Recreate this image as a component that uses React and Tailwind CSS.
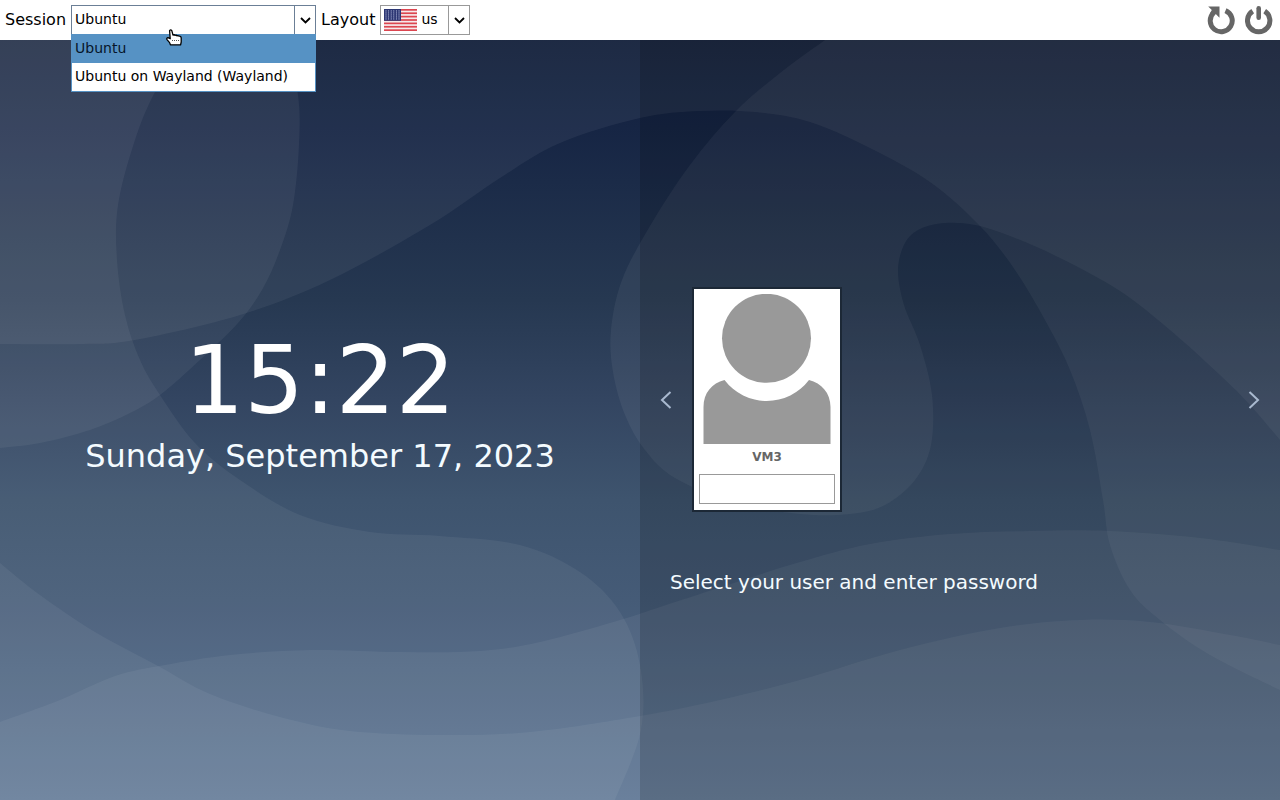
import React from "react";

const SANS = "font-['DejaVu_Sans','Noto_Sans',sans-serif]";

/* Smooth curve through a list of points (Catmull-Rom turned into cubic Béziers). */
function smooth(points) {
  let d = `M${points[0][0]},${points[0][1]}`;
  for (let i = 0; i < points.length - 1; i++) {
    const p0 = points[i - 1] || points[i];
    const p1 = points[i];
    const p2 = points[i + 1];
    const p3 = points[i + 2] || p2;
    d += `C${p1[0] + (p2[0] - p0[0]) / 6},${p1[1] + (p2[1] - p0[1]) / 6} ${p2[0] - (p3[0] - p1[0]) / 6},${p2[1] - (p3[1] - p1[1]) / 6} ${p2[0]},${p2[1]}`;
  }
  return d;
}

const WAVES = [
  {
    points: [[0, 344], [80, 344], [135, 340], [240, 315], [330, 280], [430, 225], [500, 178], [560, 143], [640, 118], [700, 111], [755, 112], [810, 122], [870, 148], [930, 182], [980, 226], [1015, 270], [1045, 320], [1070, 370], [1090, 430], [1103, 500], [1110, 545], [1130, 590], [1160, 620], [1210, 655], [1280, 690]],
    close: "V0H0Z",
  },
  {
    points: [[215, 0], [185, 45], [155, 92], [135, 140], [118, 205], [117, 260], [125, 315], [140, 360], [160, 395], [195, 443], [240, 480], [300, 515], [370, 532], [440, 536], [520, 545], [580, 572], [620, 612], [640, 665], [641, 730], [615, 800]],
    close: "H0V0Z",
  },
  {
    points: [[262, 0], [285, 45], [298, 95], [299, 145], [293, 205], [280, 250], [262, 290], [238, 323], [200, 360], [160, 395], [130, 413], [90, 430], [40, 443], [0, 448]],
    close: "V0Z",
  },
  {
    points: [[0, 563], [40, 595], [95, 632], [160, 667], [210, 694], [280, 717], [350, 731], [440, 735], [530, 732], [640, 716], [720, 700], [800, 680], [900, 650], [1000, 628], [1080, 620], [1150, 622], [1230, 635], [1280, 645]],
    close: "V800H0Z",
  },
  {
    points: [[0, 722], [60, 700], [115, 676], [165, 665], [230, 655], [310, 650], [400, 652], [480, 651], [540, 642], [620, 620], [660, 607], [740, 581], [800, 562], [870, 544], [950, 534], [1030, 531], [1110, 531], [1200, 538], [1280, 550]],
    close: "V800H0Z",
  },
  {
    points: [[880, 0], [825, 40], [780, 73], [735, 112], [690, 165], [650, 226], [622, 280], [611, 330], [613, 372], [625, 415], [645, 450], [675, 478], [735, 503], [800, 514], [850, 514], [885, 505], [915, 480], [931, 445], [932, 395], [920, 345], [904, 305], [898, 270], [905, 243], [920, 229], [945, 223], [975, 225], [1010, 236], [1060, 258], [1120, 291], [1170, 330], [1220, 375], [1250, 405], [1280, 440]],
    close: "V0Z",
  },
];

function Wallpaper() {
  return (
    <svg
      className="absolute inset-0 h-full w-full"
      viewBox="0 0 1280 800"
      preserveAspectRatio="none"
      aria-hidden="true"
    >
      <defs>
        <linearGradient id="sky" x1="0" y1="0" x2="0" y2="1">
          <stop offset="0" stopColor="#0e1b35" />
          <stop offset="0.16" stopColor="#162544" />
          <stop offset="0.375" stopColor="#263851" />
          <stop offset="0.5" stopColor="#334561" />
          <stop offset="0.625" stopColor="#3e546e" />
          <stop offset="0.75" stopColor="#455b77" />
          <stop offset="1" stopColor="#597291" />
        </linearGradient>
      </defs>
      <rect width="1280" height="800" fill="url(#sky)" />
      {WAVES.map((w, i) => (
        <path key={i} d={smooth(w.points) + w.close} fill="#fff" fillOpacity="0.055" />
      ))}
    </svg>
  );
}

function Chevron({ className, d = "M1 1l4.500 4.500L10 1", box = "0 0 11 7", width = 1.8 }) {
  return (
    <svg className={className} viewBox={box} fill="none" stroke="currentColor" strokeWidth={width} aria-hidden="true">
      <path d={d} />
    </svg>
  );
}

function UsFlag() {
  const stars = [];
  for (let r = 0; r < 5; r++) {
    for (let c = 0; c < 6; c++) {
      stars.push(<circle key={`${r}-${c}`} cx={2 + c * 2.6} cy={1.9 + r * 2} r="0.55" />);
    }
  }
  return (
    <svg className="h-[22px] w-[33px]" viewBox="0 0 33 22" aria-hidden="true">
      <rect width="33" height="22" fill="#f6e9ea" />
      {[0, 1, 2, 3, 4, 5, 6].map((i) => (
        <rect key={i} y={(i * 44) / 13} width="33" height={22 / 13} fill="#dc4650" />
      ))}
      <rect width="17" height="11.8" fill="#2c3673" />
      <g fill="#b9c0e0">{stars}</g>
    </svg>
  );
}

function HandCursor() {
  return (
    <svg
      className="pointer-events-none absolute top-[29px] left-[166px] z-20 h-[17px] w-[17px]"
      viewBox="0 0 17 17"
      aria-hidden="true"
    >
      <path
        d="M3.6 1.6Q4.700 .2 5.800 1.600L7 6.200Q8 5.200 9 6.400Q10.200 5.600 11 6.800Q12.200 6.200 13 7.200Q15 6.800 15.200 9V13L14.600 15.800H4.400L3.600 13.600L1 10.600Q.3 8.800 2 8.700L4.200 9.700Z"
        fill="#fff"
        stroke="#000"
        strokeWidth="1.3"
        strokeLinejoin="round"
      />
      <path d="M6 11.500h7" stroke="#555" strokeDasharray="1 1" />
    </svg>
  );
}

function RestartIcon() {
  return (
    <svg className="h-[30px] w-[30px]" viewBox="0 0 30 30" aria-hidden="true">
      <path d="M18.500 5.600A11 11 0 1 1 6.600 7.800" fill="none" stroke="#666" strokeWidth="5" />
      <path d="M1.200 1.500H12.500V12.800L9 9.300L5 10L2.800 8.500L4.800 5Z" fill="#666" />
    </svg>
  );
}

function PowerIcon() {
  return (
    <svg className="h-[30px] w-[30px]" viewBox="0 0 30 30" aria-hidden="true">
      <path d="M19.700 6.200A11.200 11.200 0 1 1 7.700 6.200" fill="none" stroke="#666" strokeWidth="5" />
      <path d="M13.700 3.200V12.700" stroke="#666" strokeWidth="4.600" strokeLinecap="round" />
    </svg>
  );
}

function Avatar() {
  return (
    <svg className="h-[150px] w-32" viewBox="0 0 128 150" aria-hidden="true">
      <g fill="#999">
        <circle cx="63.500" cy="44.300" r="44.500" />
        <path d="M.5 150V113C.5 99 9 89 21.500 86A53 53 0 0 0 106 86C118.500 89 127.500 99 127.500 113V150Z" />
      </g>
    </svg>
  );
}

function TopBar() {
  return (
    <header className="relative z-10 flex h-10 items-center justify-between bg-white px-[5px] text-black">
      <div className="flex items-center gap-[5px]">
        <label htmlFor="session" className="text-base">Session</label>
        <div className="relative h-[30px] w-[245px]">
          <select
            id="session"
            defaultValue="Ubuntu"
            className="h-full w-full appearance-none border border-[#6b7f96] bg-white pr-6 pb-[2px] pl-[3px] text-sm outline-none"
          >
            <option>Ubuntu</option>
            <option>Ubuntu on Wayland (Wayland)</option>
          </select>
          <span className="pointer-events-none absolute inset-y-0 right-0 flex w-[22px] items-center justify-center border-l border-[#6b7f96]">
            <Chevron className="h-[7px] w-[11px]" />
          </span>
          <ul role="listbox" aria-label="Sessions" className="absolute inset-x-0 top-[29px] border border-[#5692c4] bg-white text-sm leading-[26px]">
            <li role="option" aria-selected="true" className="bg-[#5692c4] pb-[2px] pl-[3px] text-[#06162a]">Ubuntu</li>
            <li role="option" aria-selected="false" className="pb-[2px] pl-[3px]">Ubuntu on Wayland (Wayland)</li>
          </ul>
        </div>
        <label htmlFor="layout" className="text-base">Layout</label>
        <div className="relative h-[30px] w-[90px]">
          <select
            id="layout"
            defaultValue="us"
            className="h-full w-full appearance-none border border-[#999] bg-white pr-6 pb-[2px] pl-10 text-sm outline-none"
          >
            <option>us</option>
          </select>
          <span className="pointer-events-none absolute inset-y-0 left-1 flex items-center">
            <UsFlag />
          </span>
          <span className="pointer-events-none absolute inset-y-0 right-0 flex w-[22px] items-center justify-center border-l border-[#999]">
            <Chevron className="h-[7px] w-[11px]" />
          </span>
        </div>
      </div>
      <div className="flex gap-2">
        <button type="button" aria-label="Restart"><RestartIcon /></button>
        <button type="button" aria-label="Shut down"><PowerIcon /></button>
      </div>
    </header>
  );
}

export default function App() {
  return (
    <div className={`relative flex min-h-screen flex-col bg-[#263851] ${SANS}`}>
      <Wallpaper />
      <TopBar />
      <HandCursor />
      <main className="relative grid flex-1 grid-cols-2 text-[#f4fbff]">
        <section className="flex flex-col items-center justify-center pb-10 text-center text-white">
          <time className="text-[94px] leading-[112px]">15:22</time>
          <p className="text-[32px] leading-[38px] text-[#f4fbff]">Sunday, September 17, 2023</p>
        </section>
        <section className="grid grid-rows-[1fr_auto_1fr] bg-black/15 pb-[41px]">
          <div />
          <div className="flex items-center px-5">
            <button type="button" aria-label="Previous user" className="text-[#a9b9cf]">
              <Chevron className="h-5 w-3" box="0 0 12 20" d="M10.500 2L2 10l8.500 8" width={2} />
            </button>
            <div className="flex-1 px-5">
              <form className="flex w-[150px] flex-col items-center border-2 border-[#1c2836] bg-white px-[5px] pt-[5px] pb-[6px]">
                <Avatar />
                <label htmlFor="password" className="mb-1 text-xs leading-[26px] font-bold text-[#666]">VM3</label>
                <input
                  id="password"
                  type="password"
                  className="h-[30px] w-full border border-[#999] bg-white px-2 text-sm text-black outline-none"
                />
              </form>
            </div>
            <button type="button" aria-label="Next user" className="text-[#a9b9cf]">
              <Chevron className="h-5 w-3" box="0 0 12 20" d="M1.500 2L10 10l-8.500 8" width={2} />
            </button>
          </div>
          <p className="px-[30px] pt-[58px] text-xl leading-6">Select your user and enter password</p>
        </section>
      </main>
    </div>
  );
}
